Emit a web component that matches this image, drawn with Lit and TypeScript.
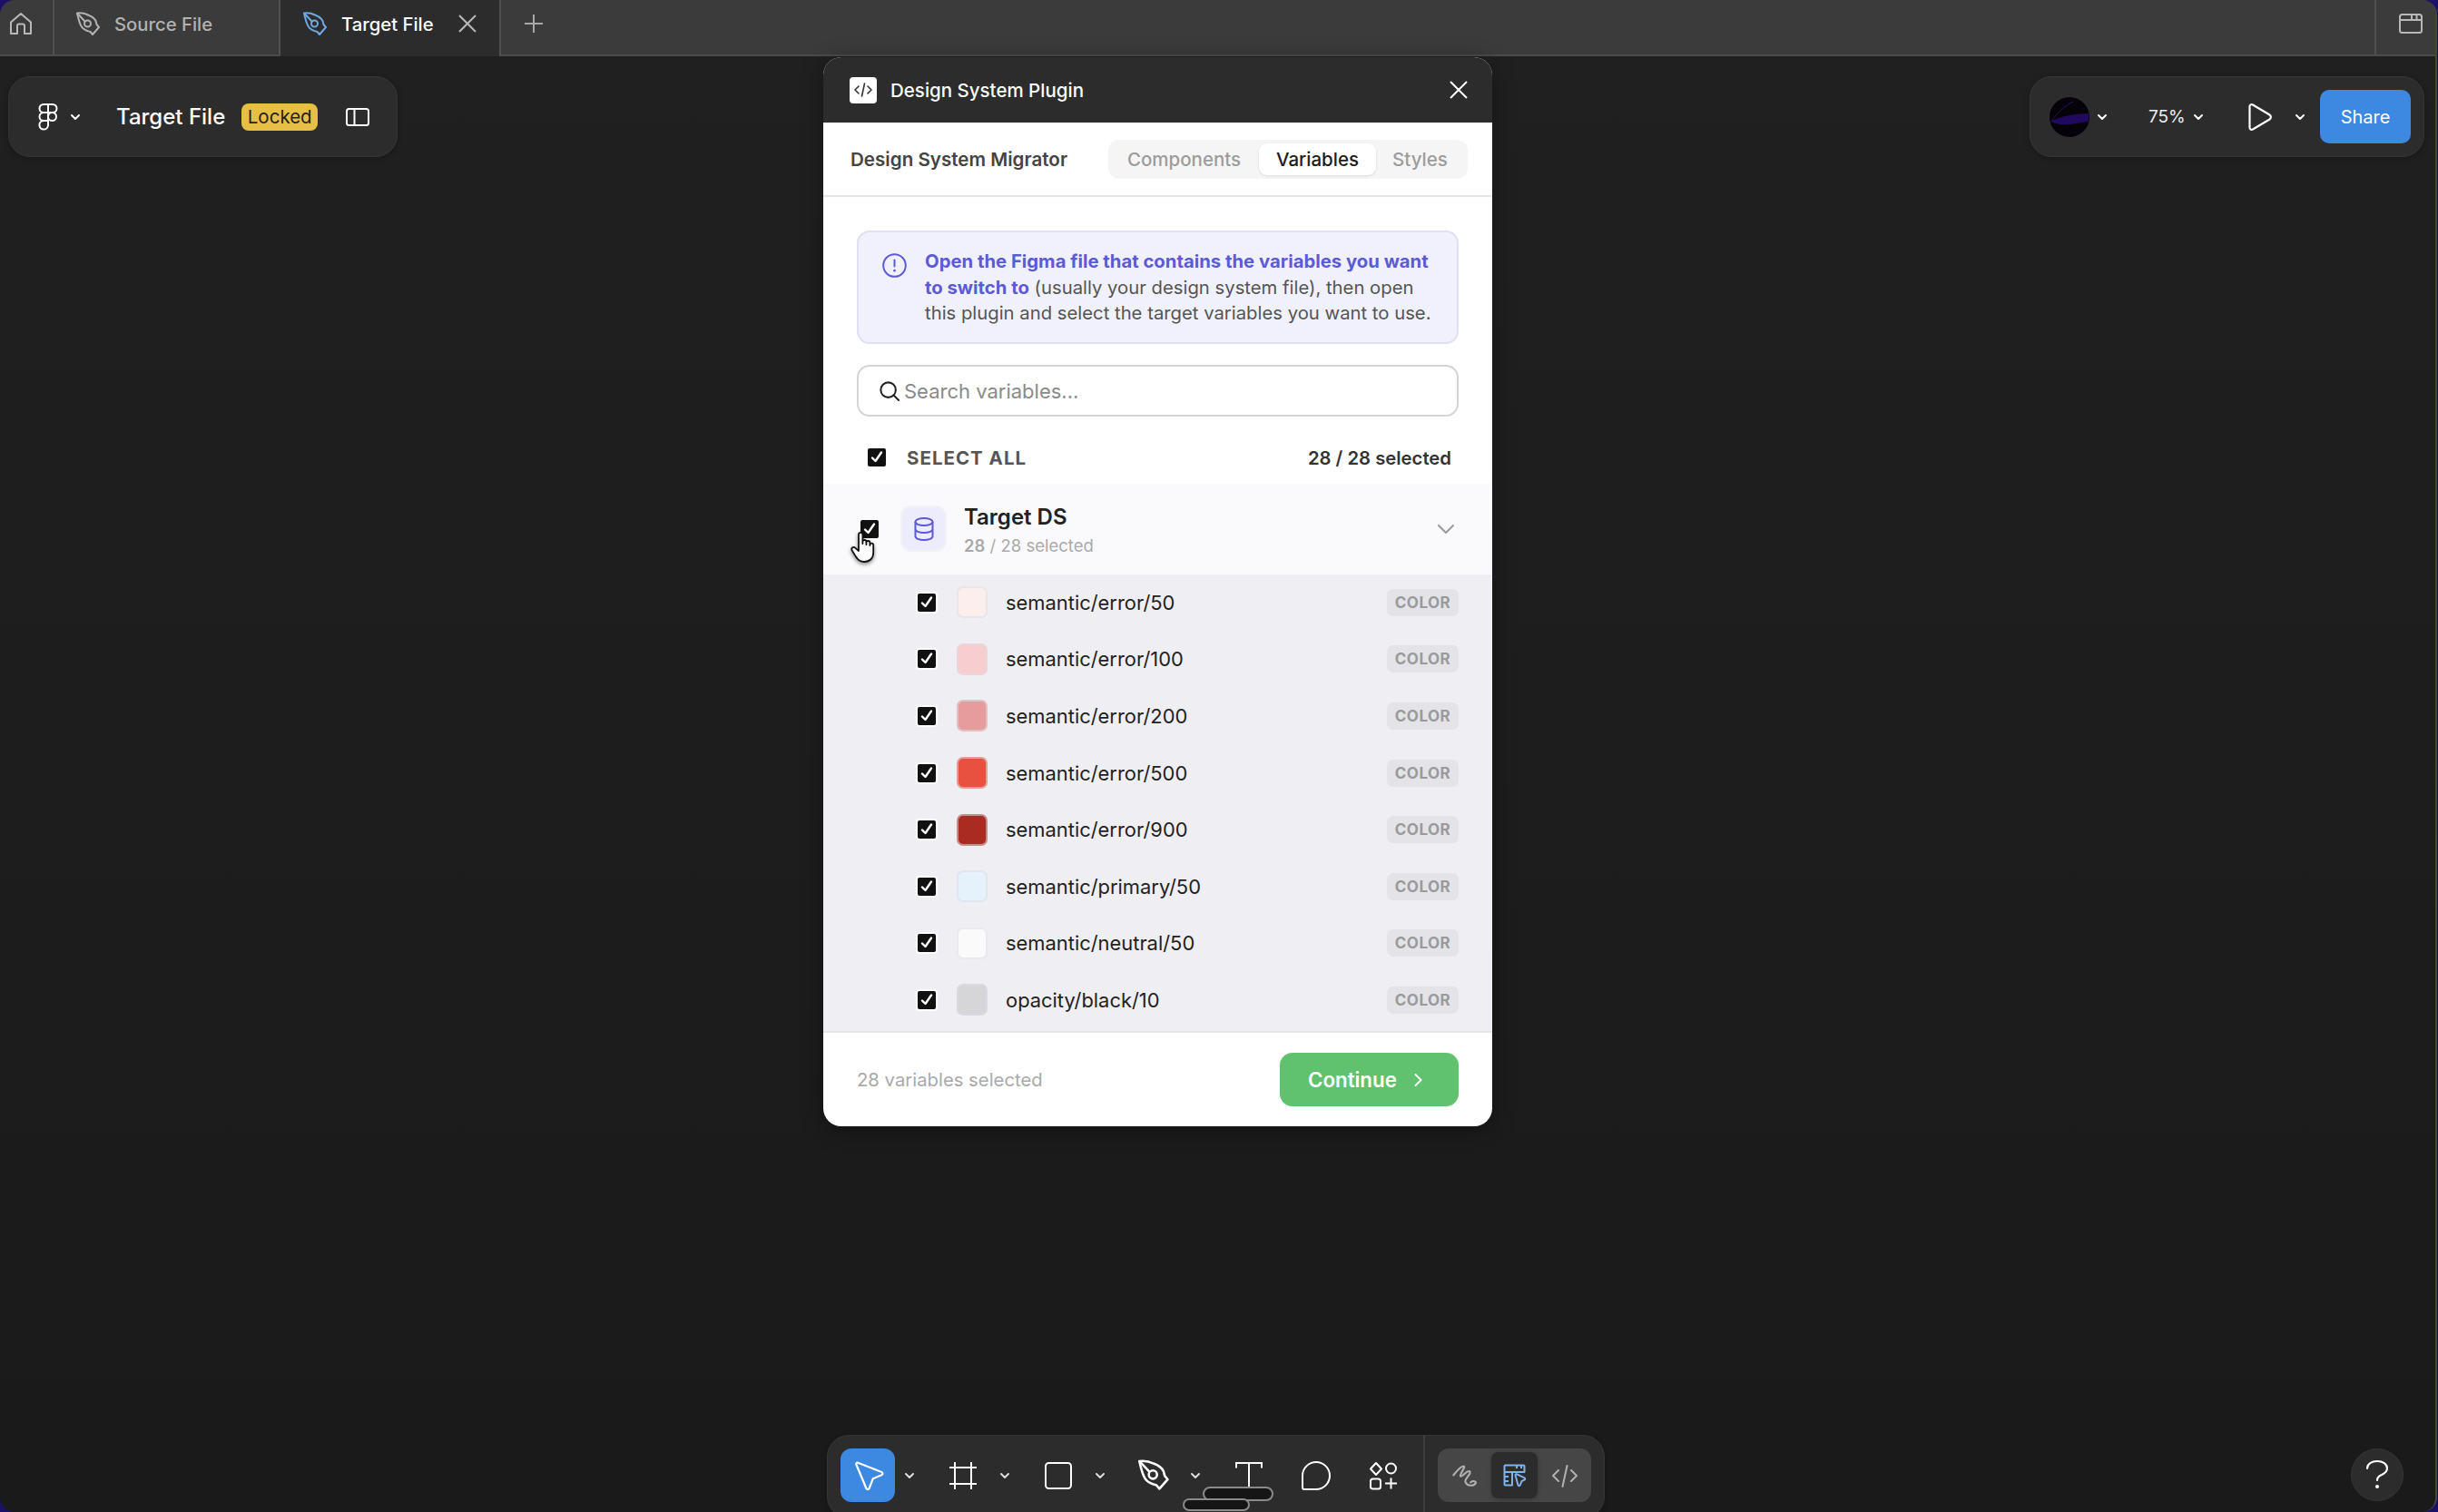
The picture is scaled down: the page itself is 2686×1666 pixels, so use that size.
import { LitElement, html, svg, css } from 'lit';
import { customElement } from 'lit/decorators.js';

const VARIABLES = [
  { name: 'semantic/error/50', color: '#fdeeee' },
  { name: 'semantic/error/100', color: '#f8cdd0' },
  { name: 'semantic/error/200', color: '#e69c9c' },
  { name: 'semantic/error/500', color: '#e8503f' },
  { name: 'semantic/error/900', color: '#a92b22' },
  { name: 'semantic/primary/50', color: '#e6f2fb' },
  { name: 'semantic/neutral/50', color: '#fafafa' },
  { name: 'opacity/black/10', color: '#d6d6d9' },
];

const caret = html`<svg class="caret-icon" width="12" height="8" viewBox="0 0 12 8" fill="none" stroke="currentColor" stroke-width="2" stroke-linecap="round" stroke-linejoin="round"><path d="M2 2l4 4 4-4"/></svg>`;

const penPaths = svg`<path d="M1 1.500C5 1 10 2 13 3.500c4 1.500 7 3.500 8.500 6.500l1 4 2.500 3-7 8-2.500-3C12 21 8 20 6 16.500 3.500 13 2 6 1 1.500Z"/><path d="M1.500 2l8 8.500"/><circle cx="12.500" cy="13" r="3.500"/>`;

const check = html`<svg width="20" height="20" viewBox="0 0 20 20" fill="none" stroke="#fff" stroke-width="2.400" stroke-linecap="round" stroke-linejoin="round"><path d="M5 10.500l3.500 3.500L15 4.500"/></svg>`;

@customElement('app-root')
export class AppRoot extends LitElement {
  static styles = css`
    :host {
      display: block;
      width: 2686px;
      height: 1666px;
      overflow: hidden;
      background: #1b1068;
      font-family: Inter, "Noto Sans", sans-serif;
    }
    svg {
      display: block;
      flex: none;
    }

    .window {
      position: relative;
      box-sizing: border-box;
      width: 2685px;
      height: 1666px;
      display: flex;
      flex-direction: column;
      overflow: hidden;
      border-right: 2px solid #444;
      border-radius: 16px;
      background: linear-gradient(#202020, #1a1a1a);
    }

    /* tab strip */
    .tabs {
      flex: none;
      box-sizing: border-box;
      height: 62px;
      display: flex;
      background: #3b3b3b;
      border-bottom: 2px solid #4c4c4c;
    }
    .tab {
      box-sizing: border-box;
      display: flex;
      align-items: center;
      padding-bottom: 8px;
      border-right: 2px solid #505050;
      font-size: 20.300px;
      font-weight: 500;
      color: #b2b2b2;
    }
    .tab-home {
      width: 60px;
      padding-left: 11px;
      color: #b8b8b8;
    }
    .tab-source {
      width: 249px;
      padding-left: 24px;
      gap: 15px;
    }
    .tab-target {
      width: 243px;
      padding-left: 25px;
      padding-bottom: 10px;
      gap: 15px;
      color: #fff;
      background: #2c2c2c;
      margin-bottom: -2px;
    }
    .tab-target .pen {
      color: #6fa9e0;
    }
    .tab-close {
      margin-left: 12px;
      color: #b8b8b8;
    }
    .tab-add {
      margin: 0 0 8px 26px;
      align-self: center;
      color: #a8a8a8;
    }
    .tab-fill {
      flex: 1;
      border-right: 2px solid #505050;
    }
    .tab-window {
      width: 65px;
      display: flex;
      align-items: center;
      padding: 0 0 8px 25px;
      box-sizing: border-box;
      color: #b8b8b8;
    }
    .pen {
      fill: none;
      stroke: currentColor;
      stroke-width: 2;
      stroke-linejoin: round;
      stroke-linecap: round;
    }

    /* floating bars */
    .bar {
      position: absolute;
      box-sizing: border-box;
      display: flex;
      align-items: center;
      background: #2c2c2c;
      border: 1px solid #363636;
      border-radius: 24px;
      color: #fff;
      box-shadow: 0 2px 6px rgba(0, 0, 0, 0.25);
    }
    .bar-left {
      left: 9px;
      top: 84px;
      width: 429px;
      height: 89px;
      padding-left: 32px;
    }
    .bar-left .caret-icon {
      margin-left: 13px;
    }
    .file-name {
      margin-left: 39px;
      font-size: 24px;
      font-weight: 500;
      white-space: nowrap;
    }
    .locked {
      margin-left: 18px;
      width: 84px;
      height: 30px;
      display: flex;
      align-items: center;
      justify-content: center;
      background: #e8bf45;
      border-radius: 8px;
      color: #222;
      font-size: 20.500px;
    }
    .panel-icon {
      margin-left: 31px;
    }
    .bar-right {
      left: 2236px;
      top: 84px;
      width: 435px;
      height: 89px;
      padding-left: 21px;
    }
    .bar-right .caret-a {
      margin-left: 8px;
    }
    .zoom-value {
      margin-left: 45px;
      width: 39px;
      font-size: 19px;
      white-space: nowrap;
      color: #eee;
    }
    .bar-right .caret-b {
      margin-left: 10px;
    }
    .play {
      margin-left: 49px;
    }
    .bar-right .caret-c {
      margin-left: 25px;
    }
    .share {
      margin-left: 16px;
      width: 100px;
      height: 59px;
      display: flex;
      align-items: center;
      justify-content: center;
      background: #3d88e0;
      border-radius: 10px;
      font-size: 20px;
      font-weight: 400;
    }
    .caret-wrap {
      display: flex;
    }

    /* plugin */
    .plugin {
      position: absolute;
      left: 907px;
      top: 63px;
      width: 737px;
      height: 1178px;
      display: flex;
      flex-direction: column;
      overflow: hidden;
      border-radius: 20px;
      background: #fff;
      box-shadow: 0 4px 24px rgba(0, 0, 0, 0.35);
    }
    .plugin-head {
      flex: none;
      box-sizing: border-box;
      height: 72px;
      padding: 0 27px 0 29px;
      display: flex;
      align-items: center;
      gap: 15px;
      background: #2c2c2c;
      color: #fff;
      font-size: 20.500px;
      font-weight: 500;
    }
    .plugin-logo {
      width: 30px;
      height: 29px;
      display: flex;
      align-items: center;
      justify-content: center;
      background: #fff;
      border-radius: 4px;
      color: #333;
    }
    .plugin-close {
      margin-left: auto;
    }
    .sub-head {
      flex: none;
      box-sizing: border-box;
      height: 82px;
      padding: 0 27px 0 30px;
      display: flex;
      align-items: center;
      justify-content: space-between;
      border-bottom: 2px solid #e6e6e6;
    }
    .sub-title {
      font-size: 20.600px;
      font-weight: 600;
      color: #444;
      white-space: nowrap;
    }
    .segments {
      box-sizing: border-box;
      width: 396px;
      height: 43px;
      padding: 4px;
      display: flex;
      background: #f5f5f5;
      border-radius: 12px;
      font-size: 20.500px;
      font-weight: 500;
      color: #9c9c9c;
    }
    .segment {
      display: flex;
      align-items: center;
      justify-content: center;
    }
    .segment-components {
      box-sizing: border-box;
      width: 162px;
      padding-right: 3px;
    }
    .segment-variables {
      width: 129px;
      background: #fff;
      border-radius: 9px;
      color: #1d1d1d;
      box-shadow: 0 1px 3px rgba(0, 0, 0, 0.1);
    }
    .segment-styles {
      width: 97px;
    }

    .notice {
      flex: none;
      box-sizing: border-box;
      height: 125px;
      margin: 37px 37px 0 37px;
      padding: 18px 20px 0 26px;
      display: flex;
      gap: 20px;
      background: #f1f1fd;
      border: 2px solid #dfdff6;
      border-radius: 14px;
    }
    .notice-icon {
      margin-top: 5px;
      color: #5b5bd6;
    }
    .notice-text {
      font-size: 20.300px;
      line-height: 28.600px;
      color: #555;
    }
    .notice-text strong {
      font-weight: 700;
      color: #5b5bd6;
    }
    .search {
      flex: none;
      box-sizing: border-box;
      height: 57px;
      margin: 23px 37px 0 37px;
      padding-left: 23px;
      display: flex;
      align-items: center;
      gap: 5px;
      border: 2px solid #d4d4d4;
      border-radius: 14px;
      font-size: 22px;
      color: #8a8a8a;
    }
    .search svg {
      color: #222;
    }
    .select-all {
      flex: none;
      box-sizing: border-box;
      height: 74px;
      padding: 16px 45px 0 49px;
      display: flex;
      align-items: center;
      gap: 23px;
    }
    .box {
      flex: none;
      width: 20px;
      height: 20px;
      background: #111;
      border-radius: 2px;
    }
    .select-label {
      font-size: 20.500px;
      font-weight: 700;
      letter-spacing: 1px;
      color: #555;
    }
    .select-count {
      margin-left: auto;
      font-size: 20.300px;
      font-weight: 600;
      color: #333;
    }
    .group {
      position: relative;
      flex: none;
      box-sizing: border-box;
      height: 99.500px;
      padding: 0 42px 0 41px;
      display: flex;
      align-items: center;
      background: #fafafc;
    }
    .group-tile {
      margin-left: 24px;
      width: 51px;
      height: 51px;
      box-sizing: border-box;
      display: flex;
      align-items: center;
      justify-content: center;
      background: #ececfc;
      border: 2px solid #f1f1f6;
      border-radius: 12px;
      color: #5b5bd6;
    }
    .group-text {
      margin-left: 19px;
      padding-top: 3px;
      display: flex;
      flex-direction: column;
      gap: 6px;
    }
    .group-name {
      font-size: 24px;
      line-height: 28px;
      font-weight: 600;
      color: #222;
    }
    .group-count {
      font-size: 18.500px;
      line-height: 22px;
      color: #aaa;
    }
    .group-count b {
      font-weight: 600;
    }
    .group-caret {
      margin-left: auto;
      color: #999;
    }
    .hand {
      position: absolute;
      left: 30px;
      top: 52px;
      filter: drop-shadow(0 2px 2px rgba(0, 0, 0, 0.45));
    }
    .list {
      flex: 1;
      min-height: 0;
      overflow: hidden;
      background: #eeeef3;
    }
    .row {
      box-sizing: border-box;
      height: 62.600px;
      padding: 0 37px 0 104px;
      display: flex;
      align-items: center;
    }
    .row .box {
      box-shadow: 0 0 0 2px #fff;
    }
    .swatch {
      box-sizing: border-box;
      margin-left: 23px;
      width: 34px;
      height: 35px;
      border: 2px solid rgba(220, 220, 228, 0.55);
      border-radius: 7px;
    }
    .var-name {
      margin-left: 20px;
      font-size: 21.900px;
      color: #222;
    }
    .type {
      margin-left: auto;
      width: 79px;
      height: 30px;
      display: flex;
      align-items: center;
      justify-content: center;
      background: #e3e3e8;
      border-radius: 7px;
      font-size: 17px;
      font-weight: 700;
      letter-spacing: 0.500px;
      color: #9a9a9a;
    }
    .foot {
      flex: none;
      box-sizing: border-box;
      height: 105px;
      padding: 0 37px 0 37px;
      display: flex;
      align-items: center;
      justify-content: space-between;
      border-top: 2px solid #e6e6e6;
    }
    .foot-count {
      font-size: 20.300px;
      color: #aaa;
    }
    .continue {
      box-sizing: border-box;
      width: 197px;
      height: 59px;
      padding-left: 31px;
      display: flex;
      align-items: center;
      gap: 19px;
      background: #60c26e;
      border-radius: 14px;
      color: #fff;
      font-size: 22.300px;
      font-weight: 600;
    }

    /* bottom toolbar */
    .bar-tools {
      left: 911px;
      top: 1581px;
      width: 857px;
      height: 92px;
      padding: 14px 0 0 14px;
      align-items: flex-start;
    }
    .tools {
      display: flex;
      gap: 14px;
    }
    .tool-group {
      display: flex;
      gap: 1px;
    }
    .tool {
      width: 60px;
      height: 59px;
      display: flex;
      align-items: center;
      justify-content: center;
      border-radius: 12px;
    }
    .tool-active {
      background: #3d88e0;
    }
    .tool-caret {
      width: 30px;
      height: 59px;
      display: flex;
      align-items: center;
      justify-content: center;
      color: #ddd;
    }
    .divider {
      align-self: stretch;
      margin: -14px 0 0 14px;
      width: 2px;
      background: #3e3e3e;
    }
    .modes {
      margin-left: 14px;
      width: 169px;
      height: 59px;
      display: flex;
      align-items: center;
      background: #464646;
      border-radius: 12px;
    }
    .mode {
      width: 59px;
      height: 51px;
      display: flex;
      align-items: center;
      justify-content: center;
      color: #b0b0b0;
      border-radius: 8px;
    }
    .mode-active {
      width: 51px;
      background: #2c2c2c;
      color: #7db4ee;
      box-shadow: 0 1px 4px rgba(0, 0, 0, 0.25);
    }
    .pill {
      position: absolute;
      box-sizing: border-box;
      background: #151515;
      border: 2px solid #8a8a8a;
      border-radius: 10px;
    }
    .pill-a {
      left: 1325px;
      top: 1638px;
      width: 78px;
      height: 16px;
    }
    .pill-b {
      left: 1303px;
      top: 1651px;
      width: 74px;
      height: 14px;
    }
    .help {
      position: absolute;
      left: 2590px;
      top: 1596px;
      width: 58px;
      height: 58px;
      display: flex;
      align-items: center;
      justify-content: center;
      background: #2c2c2c;
      border: 1px solid #363636;
      box-sizing: border-box;
      border-radius: 50%;
      color: #fff;
    }
  `;

  renderPen(size: number) {
    return html`<svg class="pen" width=${size} height=${size} viewBox="0 0 27 27">${penPaths}</svg>`;
  }

  renderTabs() {
    return html`
      <div class="tabs">
        <div class="tab tab-home">
          <svg width="24" height="24" viewBox="0 0 24 24" fill="none" stroke="currentColor" stroke-width="2" stroke-linejoin="round"><path d="M1 10.500L12 1l11 9.500V23h-7v-8.500a2 2 0 0 0-2-2h-4a2 2 0 0 0-2 2V23H1Z"/></svg>
        </div>
        <div class="tab tab-source">${this.renderPen(27)}<span>Source File</span></div>
        <div class="tab tab-target">
          ${this.renderPen(27)}<span>Target File</span>
          <svg class="tab-close" width="20" height="20" viewBox="0 0 20 20" fill="none" stroke="currentColor" stroke-width="2"><path d="M1 1l18 18M19 1L1 19"/></svg>
        </div>
        <svg class="tab-add" width="20" height="20" viewBox="0 0 20 20" fill="none" stroke="currentColor" stroke-width="2"><path d="M10 0v20M0 10h20"/></svg>
        <div class="tab-fill"></div>
        <div class="tab-window">
          <svg width="26" height="22" viewBox="0 0 26 22" fill="none" stroke="currentColor" stroke-width="2" stroke-linejoin="round"><rect x="1" y="1" width="24" height="20" rx="2.500"/><path d="M1 7h24M14 1v6M19.500 1v6"/></svg>
        </div>
      </div>
    `;
  }

  renderBars() {
    return html`
      <div class="bar bar-left">
        <svg width="22" height="30" viewBox="0 0 22 30" fill="none" stroke="currentColor" stroke-width="2"><path d="M11 1H6a4.500 4.500 0 0 0 0 9h5ZM11 1h5a4.500 4.500 0 0 1 0 9h-5ZM11 10H6a4.500 4.500 0 0 0 0 9h5Z"/><circle cx="15.500" cy="14.500" r="4.500"/><path d="M6 19h5v5a4.800 4.800 0 1 1-5-5Z"/></svg>
        ${caret}
        <span class="file-name">Target File</span>
        <span class="locked">Locked</span>
        <svg class="panel-icon" width="26" height="20" viewBox="0 0 26 20" fill="none" stroke="currentColor" stroke-width="2"><rect x="1" y="1" width="24" height="18" rx="2.500"/><path d="M9.500 1v18"/></svg>
      </div>

      <div class="bar bar-right">
        <svg width="44" height="44" viewBox="0 0 44 44">
          <circle cx="22" cy="22" r="22" fill="#050309"/>
          <path d="M1 27C8 23 18 19 43 18c.8 4 .4 7-.5 9-10 1.500-22 4-31 3-4-.5-7-1.500-10.500-3Z" fill="#1f0a5e"/>
          <path d="M2 27C8 18 16 10 26 5" fill="none" stroke="#1e1860" stroke-width="1"/>
        </svg>
        <span class="caret-wrap caret-a">${caret}</span>
        <span class="zoom-value">75%</span>
        <span class="caret-wrap caret-b">${caret}</span>
        <svg class="play" width="26" height="30" viewBox="0 0 26 30" fill="none" stroke="currentColor" stroke-width="2.200" stroke-linejoin="round"><path d="M1.500 3.500c0-2 1.500-3 3.500-2l18.500 11c1.800 1.100 1.800 3.900 0 5L5 28.500c-2 1-3.500 0-3.500-2Z"/></svg>
        <span class="caret-wrap caret-c">${caret}</span>
        <div class="share">Share</div>
      </div>
    `;
  }

  renderPlugin() {
    return html`
      <section class="plugin">
        <header class="plugin-head">
          <span class="plugin-logo">
            <svg width="20" height="16" viewBox="0 0 20 16" fill="none" stroke="currentColor" stroke-width="1.600" stroke-linecap="round" stroke-linejoin="round"><path d="M5 4L1 8l4 4M15 4l4 4-4 4M11.500 1l-3 14"/></svg>
          </span>
          <span>Design System Plugin</span>
          <svg class="plugin-close" width="20" height="20" viewBox="0 0 20 20" fill="none" stroke="currentColor" stroke-width="2"><path d="M1 1l18 18M19 1L1 19"/></svg>
        </header>

        <div class="sub-head">
          <span class="sub-title">Design System Migrator</span>
          <div class="segments">
            <span class="segment segment-components">Components</span>
            <span class="segment segment-variables">Variables</span>
            <span class="segment segment-styles">Styles</span>
          </div>
        </div>

        <div class="notice">
          <svg class="notice-icon" width="27" height="27" viewBox="0 0 27 27" fill="none" stroke="currentColor" stroke-width="2" stroke-linecap="round"><circle cx="13.500" cy="13.500" r="12.300"/><path d="M13.500 7.500v7"/><path d="M13.500 19v.2" stroke-width="2.600"/></svg>
          <div class="notice-text"><strong>Open the Figma file that contains the variables you want</strong> <strong>to switch to</strong> <span>(usually your design system file), then open</span> <span>this plugin and select the target variables you want to use.</span></div>
        </div>

        <div class="search">
          <svg width="22" height="22" viewBox="0 0 24 24" fill="none" stroke="currentColor" stroke-width="2.200" stroke-linecap="round"><circle cx="10.500" cy="10.500" r="9"/><path d="M17 17l6 6"/></svg>
          <span>Search variables...</span>
        </div>

        <div class="select-all">
          <span class="box">${check}</span>
          <span class="select-label">SELECT ALL</span>
          <span class="select-count">28 / 28 selected</span>
        </div>

        <div class="group">
          <span class="box">${check}</span>
          <span class="group-tile">
            <svg width="22" height="26" viewBox="0 0 22 26" fill="none" stroke="currentColor" stroke-width="2"><ellipse cx="11" cy="5" rx="9.500" ry="4"/><path d="M1.500 5v16c0 2.200 4.200 4 9.500 4s9.500-1.800 9.500-4V5M1.500 13c0 2.200 4.200 4 9.500 4s9.500-1.800 9.500-4"/></svg>
          </span>
          <div class="group-text">
            <span class="group-name">Target DS</span>
            <span class="group-count"><b>28</b> / 28 selected</span>
          </div>
          <svg class="group-caret" width="18" height="10" viewBox="0 0 18 10" fill="none" stroke="currentColor" stroke-width="2" stroke-linecap="round" stroke-linejoin="round"><path d="M1 1l8 8 8-8"/></svg>
          <svg class="hand" width="27" height="35" viewBox="0 0 27 35" fill="#fff" stroke="#111" stroke-width="1.800" stroke-linejoin="round"><path d="M9 18V4a2.200 2.200 0 0 1 4.400 0v10-2a2 2 0 0 1 4 0v3-2a2 2 0 0 1 4 0v3-1a2 2 0 0 1 3.800 0v9c0 6-4 10-10 10-5.500 0-7.500-2.500-9.500-6l-4-6.500c-1.500-2.800 1.700-4.800 3.700-2.700L9 22Z"/></svg>
        </div>

        <div class="list">
          ${VARIABLES.map(
            (v) => html`
              <div class="row">
                <span class="box">${check}</span>
                <span class="swatch" style="background:${v.color}"></span>
                <span class="var-name">${v.name}</span>
                <span class="type">COLOR</span>
              </div>
            `,
          )}
        </div>

        <footer class="foot">
          <span class="foot-count">28 variables selected</span>
          <div class="continue">
            <span>Continue</span>
            <svg width="9" height="16" viewBox="0 0 9 16" fill="none" stroke="currentColor" stroke-width="2" stroke-linecap="round" stroke-linejoin="round"><path d="M1.500 2l6 6-6 6"/></svg>
          </div>
        </footer>
      </section>
    `;
  }

  renderToolbar() {
    return html`
      <div class="bar bar-tools">
        <div class="tools">
          <div class="tool-group">
            <div class="tool tool-active">
              <svg width="40" height="40" viewBox="0 0 40 40" fill="none" stroke="currentColor" stroke-width="2.200" stroke-linejoin="round"><path d="M7.500 8c-.9-1.400.3-2.800 1.800-2.200l26 10.300c1.500.6 1.500 2.500 0 3.100l-9.500 4-4.200 10.800c-.6 1.500-2.600 1.500-3.200 0Z"/></svg>
            </div>
            <div class="tool-caret">${caret}</div>
          </div>
          <div class="tool-group">
            <div class="tool">
              <svg width="30" height="30" viewBox="0 0 30 30" fill="none" stroke="currentColor" stroke-width="2"><path d="M6 0v30M24 0v30M0 6h30M0 24h30"/></svg>
            </div>
            <div class="tool-caret">${caret}</div>
          </div>
          <div class="tool-group">
            <div class="tool">
              <svg width="30" height="30" viewBox="0 0 30 30" fill="none" stroke="currentColor" stroke-width="2"><rect x="1" y="1" width="28" height="28" rx="3.500"/></svg>
            </div>
            <div class="tool-caret">${caret}</div>
          </div>
          <div class="tool-group">
            <div class="tool">${this.renderPen(35)}</div>
            <div class="tool-caret">${caret}</div>
          </div>
          <div class="tool">
            <svg width="30" height="30" viewBox="0 0 30 30" fill="none" stroke="currentColor" stroke-width="2"><path d="M1 6.500V1h28v5.500M15 1v28"/></svg>
          </div>
          <div class="tool">
            <svg width="32" height="32" viewBox="0 0 32 32" fill="none" stroke="currentColor" stroke-width="2"><path d="M16 1a15 15 0 0 1 0 30H3a2 2 0 0 1-2-2V16A15 15 0 0 1 16 1Z"/></svg>
          </div>
          <div class="tool">
            <svg width="32" height="32" viewBox="0 0 32 32" fill="none" stroke="currentColor" stroke-width="2" stroke-linejoin="round"><path d="M8 2l6 6.500L8 15 2 8.500Z"/><circle cx="24.500" cy="8" r="5.500"/><rect x="2" y="19.500" width="11" height="11" rx="2.500"/><path d="M24.500 18.500v12M18 24.500h13"/></svg>
          </div>
        </div>
        <div class="divider"></div>
        <div class="modes">
          <div class="mode">
            <svg width="30" height="29" viewBox="0 0 27 26" fill="none" stroke="currentColor" stroke-width="1.900" stroke-linecap="round" stroke-linejoin="round"><path d="M2 13C6 8 10 4 12 4c3 0-4 8-3 10 2 1 6-6 9-5 3 2-6 8-4 11 2 4 8 4 10 1 1-2-2-3-5-1"/></svg>
          </div>
          <div class="mode mode-active">
            <svg width="26" height="26" viewBox="0 0 26 26" fill="none" stroke="currentColor" stroke-width="2" stroke-linejoin="round"><path d="M1.500 2.500a1 1 0 0 1 1-1h20a1 1 0 0 1 1 1V9H10v14.500H2.500a1 1 0 0 1-1-1Z"/><path d="M10 9H1.500M6 14H1.500M6 19H1.500M15 1.500V5M20 1.500V5"/><path d="M13.500 12.500c0-1 .8-1.500 1.700-1.100l8.300 4c1 .5 1 1.800 0 2.200l-3 1.400-1.800 4.500c-.4 1-1.800 1-2.200 0Z"/></svg>
          </div>
          <div class="mode">
            <svg width="28" height="26" viewBox="0 0 28 26" fill="none" stroke="currentColor" stroke-width="2" stroke-linecap="round" stroke-linejoin="round"><path d="M7 7l-6 6 6 6M21 7l6 6-6 6M16.500 2l-5 23"/></svg>
          </div>
        </div>
      </div>
      <div class="pill pill-a"></div>
      <div class="pill pill-b"></div>
      <div class="help">
        <svg width="26" height="34" viewBox="0 0 26 34" fill="none" stroke="currentColor" stroke-width="2.200" stroke-linecap="round"><path d="M2 10C2 5 7 2 13 2s11 3 11 8c0 4-3 5.500-6 7-3 1.200-5 2.500-5 6"/><circle cx="13" cy="30" r="2" fill="currentColor" stroke="none"/></svg>
      </div>
    `;
  }

  render() {
    return html`
      <div class="window">
        ${this.renderTabs()} ${this.renderBars()} ${this.renderPlugin()} ${this.renderToolbar()}
      </div>
    `;
  }
}
